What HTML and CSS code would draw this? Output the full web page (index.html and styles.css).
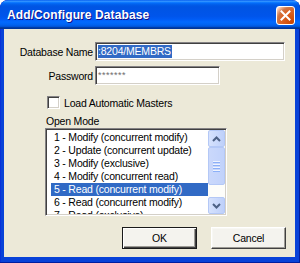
FILE: index.html
```html
<!DOCTYPE html>
<html lang="en">
<head>
  <meta charset="UTF-8">
  <title>Add/Configure Database</title>
  <link rel="stylesheet" href="styles.css">
</head>
<body>
  <div class="window">
    <div class="titlebar">
      <span class="title">Add/Configure Database</span>
      <div class="close-btn">
        <svg width="11" height="11" viewBox="0 0 11 11">
          <path d="M1.5 1.5 L9.5 9.5 M9.5 1.5 L1.5 9.5" stroke="#fff" stroke-width="2" stroke-linecap="square"/>
        </svg>
      </div>
    </div>

    <div class="client">
      <div class="fields">
        <label class="field-label">Database Name</label>
        <div class="edit edit-wide"><span class="sel">:8204/MEMBRS</span></div>
        <label class="field-label">Password</label>
        <div class="edit edit-short"><span class="stars">*******</span></div>
      </div>

      <div class="check-row">
        <span class="checkbox"></span>
        <span>Load Automatic Masters</span>
      </div>

      <div class="mode">
        <div class="mode-label">Open Mode</div>
        <div class="listbox">
          <div class="items">
            <div class="item">1 - Modify (concurrent modify)</div>
            <div class="item">2 - Update (concurrent update)</div>
            <div class="item">3 - Modify (exclusive)</div>
            <div class="item">4 - Modify (concurrent read)</div>
            <div class="item selected">5 - Read (concurrent modify)</div>
            <div class="item">6 - Read (concurrent modify)</div>
            <div class="item">7 - Read (exclusive)</div>
          </div>
          <div class="scrollbar">
            <div class="sb-btn">
              <svg width="9" height="6" viewBox="0 0 9 6"><path d="M1 5 L4.5 1.5 L8 5" fill="none" stroke="#4d6185" stroke-width="2"/></svg>
            </div>
            <div class="sb-thumb">
              <span></span><span></span><span></span><span></span>
            </div>
            <div class="sb-track"></div>
            <div class="sb-btn">
              <svg width="9" height="6" viewBox="0 0 9 6"><path d="M1 1 L4.5 4.5 L8 1" fill="none" stroke="#4d6185" stroke-width="2"/></svg>
            </div>
          </div>
        </div>
      </div>

      <div class="buttons">
        <button class="btn btn-default">OK</button>
        <button class="btn">Cancel</button>
      </div>
    </div>
  </div>
</body>
</html>
```

FILE: styles.css
```css
html, body {
  margin: 0;
  padding: 0;
  background: #ffffff;
  font-family: "Liberation Sans", Arial, sans-serif;
  font-size: 10.5px;
  letter-spacing: -0.2px;
  color: #000;
}

.window {
  width: 300px;
  height: 263px;
  display: flex;
  flex-direction: column;
  background: #0842d8;
  border-radius: 8px 8px 0 0;
  box-shadow: inset -1px -1px #001ea0, inset 1px 0 #0831d9;
  box-sizing: border-box;
  overflow: hidden;
}

/* Title bar */
.titlebar {
  height: 29px;
  flex: none;
  display: flex;
  align-items: center;
  justify-content: space-between;
  padding: 0 5px 0 7px;
  background: linear-gradient(to bottom, #0058ee 0%, #3593ff 4%, #288eff 6%, #127dff 8%, #036ffc 10%, #0262ee 14%, #0057e5 20%, #0054e3 24%, #0055eb 56%, #005bf5 66%, #026afe 76%, #0062ef 86%, #0052d6 92%, #0040ab 94%, #003092 100%);
  border-radius: 8px 8px 0 0;
}

.title {
  color: #fff;
  font-weight: bold;
  font-size: 12px;
  letter-spacing: 0.1px;
  text-shadow: 1px 1px #0f1089;
  margin-top: 1px;
}

.close-btn {
  width: 19px;
  height: 19px;
  box-sizing: border-box;
  border: 1px solid #fff;
  border-radius: 3px;
  background: radial-gradient(circle at 90% 90%, #cc4600 0%, #dc6527 55%, #cd7546 70%, #ffccb2 90%, #fff 100%);
  display: flex;
  align-items: center;
  justify-content: center;
  margin-top: 1px;
}

/* Client area */
.client {
  flex: 1;
  margin: 0 5px 6px 4px;
  background: #ece9d8;
  padding-top: 13px;
  display: flex;
  flex-direction: column;
}

.fields {
  display: grid;
  grid-template-columns: 76px auto;
  column-gap: 2px;
  row-gap: 5px;
  padding-left: 13px;
  align-items: center;
}

.field-label {
  text-align: right;
  white-space: nowrap;
}

.edit {
  height: 19px;
  box-sizing: border-box;
  background: #fff;
  border: 1px solid;
  border-color: #848284 #fff #fff #848284;
  box-shadow: inset 1px 1px #404040, inset -1px -1px #d4d0c8;
  display: flex;
  align-items: center;
  padding-left: 2px;
  overflow: hidden;
}

.edit-wide { width: 190px; }
.edit-short { width: 125px; }

.sel {
  background: #316ac5;
  color: #fff;
  line-height: 13px;
  padding-right: 1px;
}

.stars {
  color: #6b6b6b;
  font-size: 9px;
  letter-spacing: 0.5px;
  margin-top: -2px;
}

.check-row {
  display: flex;
  align-items: center;
  gap: 4px;
  height: 13px;
  margin: 11px 0 0 43px;
}

.checkbox {
  width: 13px;
  height: 13px;
  box-sizing: border-box;
  background: #fff;
  border: 1px solid;
  border-color: #848284 #fff #fff #848284;
  box-shadow: inset 1px 1px #404040, inset -1px -1px #d4d0c8;
}

.mode {
  margin: 6px 0 0 41px;
}

.mode-label {
  height: 13px;
  line-height: 13px;
  padding-left: 1px;
}

.listbox {
  width: 182px;
  height: 88px;
  box-sizing: border-box;
  background: #fff;
  border: 1px solid;
  border-color: #848284 #fff #fff #848284;
  box-shadow: inset 1px 1px #404040, inset -1px -1px #d4d0c8;
  padding: 2px 1px 1px 2px;
  display: flex;
  overflow: hidden;
}

.items {
  flex: 1;
  padding-left: 3px;
  overflow: hidden;
}

.item {
  height: 13px;
  line-height: 13px;
  padding-left: 3px;
  white-space: nowrap;
}

.item.selected {
  background: #316ac5;
  color: #fff;
}

/* Scrollbar */
.scrollbar {
  width: 17px;
  flex: none;
  display: flex;
  flex-direction: column;
  background: #fdfdfa;
  margin-top: -1px;
}

.sb-btn {
  height: 17px;
  flex: none;
  box-sizing: border-box;
  border: 1px solid #b4c8f6;
  border-radius: 2px;
  background: linear-gradient(to right, #d6e2fd, #bed0fa);
  display: flex;
  align-items: center;
  justify-content: center;
}

.sb-thumb {
  height: 38px;
  flex: none;
  box-sizing: border-box;
  border: 1px solid #b4c8f6;
  border-radius: 2px;
  background: linear-gradient(to right, #cad8fb, #c1d2fb);
  display: flex;
  flex-direction: column;
  align-items: center;
  justify-content: center;
  gap: 1px;
}

.sb-thumb span {
  width: 7px;
  height: 1px;
  background: #eef3fe;
  border-bottom: 1px solid #8cb0f8;
}

.sb-track {
  flex: 1;
}

/* Buttons */
.buttons {
  display: flex;
  justify-content: flex-end;
  gap: 14px;
  margin-top: 11px;
  padding-right: 9px;
}

.btn {
  width: 75px;
  height: 22px;
  box-sizing: border-box;
  font-family: "Liberation Sans", Arial, sans-serif;
  font-size: 10.5px;
  letter-spacing: -0.2px;
  color: #000;
  background: #f4f3ee;
  border: 1px solid;
  border-color: #fff #404040 #404040 #fff;
  box-shadow: inset -1px -1px #9c9a94, inset 1px 1px #f8f8f4;
  padding: 0;
}

.btn-default {
  border: 1px solid #1a1a1a;
  box-shadow: inset 1px 1px #fff, inset -1px -1px #404040, inset -2px -2px #9c9a94;
}
```
